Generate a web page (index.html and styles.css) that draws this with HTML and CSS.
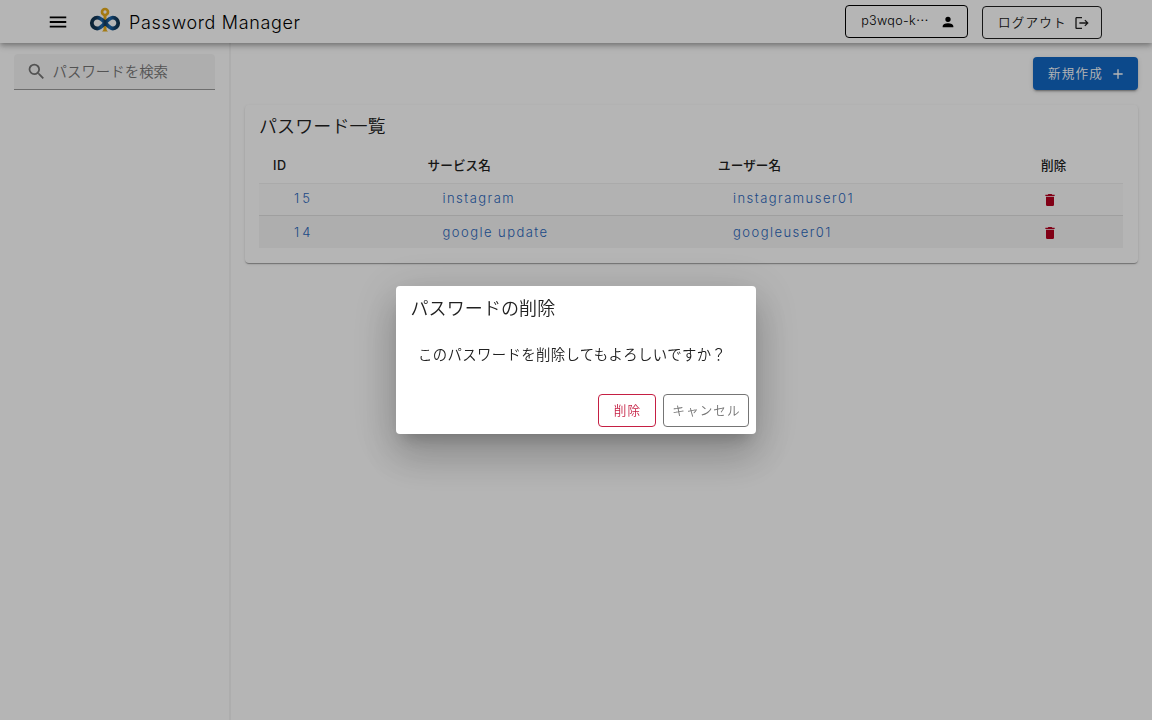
FILE: index.html
```html
<!DOCTYPE html>
<html lang="ja">
<head>
<meta charset="utf-8">
<title>Password Manager</title>
<link rel="stylesheet" href="styles.css">
</head>
<body>
<header class="bar">
  <svg class="menu" viewBox="0 0 24 24"><path d="M3 6h18v2H3V6m0 5h18v2H3v-2m0 5h18v2H3v-2Z"/></svg>
  <svg class="logo" viewBox="0 0 32 26">
    <defs>
      <linearGradient id="loop" gradientUnits="userSpaceOnUse" x1="2" y1="0" x2="30" y2="0"><stop offset="0" stop-color="#11334d"/><stop offset=".2" stop-color="#12385a"/><stop offset=".38" stop-color="#1b6bb5"/><stop offset=".5" stop-color="#12385a"/><stop offset=".66" stop-color="#1b6bb5"/><stop offset=".85" stop-color="#12406a"/><stop offset="1" stop-color="#11334d"/></linearGradient>
    </defs>
    <path d="M16 7v17" stroke="#e8ad1c" stroke-width="3" fill="none"/>
    <circle cx="16" cy="5" r="3" stroke="#e8ad1c" stroke-width="2.700" fill="none"/>
    <path d="M13 24.500l3-3 3 3Z" fill="#e8ad1c"/>
    <path d="M16 15.6C13 12.4 11 10.7 8.200 10.7a5.4 5.4 0 1 0 0 10.8c5.6 0 9.8-10.8 15.6-10.8a5.4 5.4 0 1 1 0 10.8c-2.8 0-4.8-2.4-7.8-5.900Z" stroke="url(#loop)" stroke-width="3.8" fill="none"/>
  </svg>
  <h1 class="brand">Password Manager</h1>
  <button class="btn user"><span>p3wqo-k<span class="dots">…</span></span><svg viewBox="0 0 24 24"><path d="M12 4a4 4 0 1 1 0 8 4 4 0 0 1 0-8m0 10c4.42 0 8 1.79 8 4v2H4v-2c0-2.21 3.58-4 8-4Z"/></svg></button>
  <button class="btn logout"><span>ログアウト</span><svg viewBox="0 0 24 24"><path d="m17 7-1.41 1.41L18.17 11H8v2h10.17l-2.58 2.58L17 17l5-5M4 5h8V3H4c-1.1 0-2 .9-2 2v14c0 1.1.9 2 2 2h8v-2H4V5Z"/></svg></button>
</header>
<div class="body">
  <aside class="side">
    <div class="search"><svg viewBox="0 0 24 24"><path d="M9.5 3A6.5 6.5 0 0 1 16 9.5c0 1.61-.59 3.09-1.56 4.23l.27.27h.79l5 5-1.5 1.5-5-5v-.79l-.27-.27A6.516 6.516 0 0 1 9.5 16a6.5 6.5 0 0 1 0-13m0 2C7 5 5 7 5 9.5S7 14 9.5 14 14 12 14 9.5 12 5 9.5 5Z"/></svg><span>パスワードを検索</span></div>
  </aside>
  <main class="main">
    <button class="btn create"><span>新規作成</span><svg viewBox="0 0 24 24"><path d="M19 13h-6v6h-2v-6H5v-2h6V5h2v6h6v2Z"/></svg></button>
    <section class="card">
      <h2 class="title">パスワード一覧</h2>
      <div class="table">
        <div class="row head"><span>ID</span><span>サービス名</span><span>ユーザー名</span><span>削除</span></div>
        <div class="row first"><a class="id">15</a><a>instagram</a><a>instagramuser01</a><svg class="trash" viewBox="0 0 24 24"><path d="M19 4h-3.500l-1-1h-5l-1 1H5v2h14M6 19a2 2 0 0 0 2 2h8a2 2 0 0 0 2-2V7H6v12Z"/></svg></div>
        <div class="row second"><a class="id">14</a><a>google update</a><a>googleuser01</a><svg class="trash" viewBox="0 0 24 24"><path d="M19 4h-3.500l-1-1h-5l-1 1H5v2h14M6 19a2 2 0 0 0 2 2h8a2 2 0 0 0 2-2V7H6v12Z"/></svg></div>
      </div>
    </section>
  </main>
</div>
<div class="scrim">
  <div class="dialog" role="dialog">
    <h2 class="title">パスワードの削除</h2>
    <p class="message">このパスワードを削除してもよろしいですか？</p>
    <div class="actions"><button class="btn danger"><span>削除</span></button><button class="btn cancel"><span>キャンセル</span></button></div>
  </div>
</div>
</body>
</html>
```
FILE: styles.css
```css
* { box-sizing: border-box; }
body {
  margin: 0;
  height: 720px;
  overflow: hidden;
  display: flex;
  flex-direction: column;
  background: #fff;
  color: #212121;
  font-family: Inter, "Noto Sans CJK JP", sans-serif;
  font-weight: 350;
}
h1, h2, p { margin: 0; font-weight: 350; }
svg { display: block; fill: currentColor; flex: none; }
.btn {
  display: flex;
  align-items: center;
  height: 33px;
  padding: 0;
  border: 1px solid currentColor;
  border-radius: 4px;
  background: none;
  color: #212121;
  font: inherit;
  font-size: 12.6px;
  letter-spacing: 1.13px;
  white-space: nowrap;
}
.btn > span { padding-bottom: 2px; }
.bar {
  position: relative;
  z-index: 1;
  flex: none;
  display: flex;
  align-items: center;
  height: 43px;
  padding: 0 50px 0 46.5px;
  color: #000;
  box-shadow: 0 2px 4px -1px rgba(0,0,0,.2), 0 4px 5px rgba(0,0,0,.14), 0 1px 10px rgba(0,0,0,.12);
  background: #fff;
}
.menu { width: 22px; height: 22px; }
.logo { width: 32px; height: 26px; margin: -3px 0 0 20.5px; }
.brand { margin: 3px auto 0 8px; font-size: 18px; line-height: 24px; letter-spacing: .66px; }
.user { width: 123px; padding-left: 14.5px; margin-right: 14px; color: #000; letter-spacing: .3px; }
.user > span { width: 69px; }
.user svg { width: 16px; height: 16px; margin-left: 10px; }
.dots { font-family: "Noto Sans CJK JP", sans-serif; line-height: 12px; }
.logout { width: 120px; padding-left: 15px; margin-top: 2px; }
.logout svg { width: 16px; height: 16px; margin-left: 7px; }
.logout > span { padding-bottom: 3px; }
.body { flex: 1; display: flex; }
.side { width: 231px; padding: 11px 14px 0 14px; border-right: 2px solid #f4f4f4; }
.search {
  display: flex;
  align-items: center;
  gap: 6px;
  height: 36px;
  padding-left: 11.5px;
  border-bottom: 1px solid #9c9c9c;
  border-radius: 4px 4px 0 0;
  background: #f6f6f6;
  color: #757575;
  font-size: 14.4px;
}
.search svg { width: 21px; height: 21px; }
.search span { padding-bottom: 2px; letter-spacing: .05px; }
.main { flex: 1; padding: 14px 14px 0; }
.create {
  width: 105px;
  margin: 0 0 15px auto;
  padding-left: 15px;
  border: 0;
  background: #1267c4;
  color: #fff;
  box-shadow: 0 3px 1px -2px rgba(0,0,0,.2), 0 2px 2px rgba(0,0,0,.14), 0 1px 5px rgba(0,0,0,.12);
}
.create > span { padding-bottom: 3px; }
.create svg { width: 16px; height: 16px; margin-left: 7.5px; }
.card {
  height: 158px;
  padding: 0 15px 0 14px;
  border-radius: 4px;
  box-shadow: 0 2px 1px -1px rgba(0,0,0,.2), 0 1px 1px rgba(0,0,0,.14), 0 1px 3px rgba(0,0,0,.12);
}
.title { font-size: 18px; line-height: 43px; height: 43px; letter-spacing: .1px; white-space: nowrap; }
.row {
  display: grid;
  grid-template-columns: 168.500px 290.500px 308px 1fr;
  align-items: center;
  height: 33px;
  padding-left: 15px;
  font-size: 13px;
  letter-spacing: 1.46px;
}
.head { height: 35px; padding-left: 14px; font-size: 12.6px; font-weight: 500; letter-spacing: .1px; }
.head > span { padding-bottom: 2px; }
.head > :first-child { padding-bottom: 1px; letter-spacing: .6px; }
.head > :nth-child(2), .head > :nth-child(3) { margin-left: -14px; }
.head > :last-child { margin-left: 1px; }
.first { height: 32px; background: #fbfbfb; border-top: 1px solid #f0f0f0; }
.second { background: #f5f5f5; border-top: 1px solid #e0e0e0; }
.row a { padding-bottom: 3px; color: #2b68bd; }
.second a { padding-bottom: 1px; }
.row .id { margin-left: 20px; letter-spacing: 3.2px; }
.trash { width: 16px; height: 16px; margin: 1px 0 0 1px; color: #b60020; }
.scrim {
  position: fixed;
  inset: 0;
  z-index: 2;
  display: flex;
  align-items: center;
  justify-content: center;
  background: rgba(0,0,0,.29);
}
.dialog {
  width: 360px;
  height: 148px;
  border-radius: 4px;
  background: #fff;
  box-shadow: 0 11px 15px -7px rgba(0,0,0,.2), 0 24px 38px 3px rgba(0,0,0,.14), 0 9px 46px 8px rgba(0,0,0,.12);
}
.dialog .title { padding: 1px 0 0 14.5px; }
.message { height: 65px; padding: 15px 0 0 22px; font-size: 14.4px; line-height: 22px; letter-spacing: .36px; white-space: nowrap; }
.actions { display: flex; justify-content: flex-end; gap: 7px; padding-right: 7px; }
.danger, .cancel { justify-content: center; padding-left: 1px; }
.danger { width: 58px; color: #c51f43; }
.cancel { width: 86px; color: #757575; }
```
